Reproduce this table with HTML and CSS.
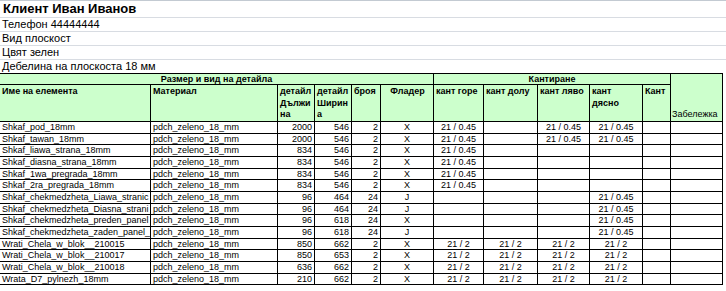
FILE: index.html
```html
<!DOCTYPE html>
<html lang="bg">
<head>
<meta charset="utf-8">
<title>Клиент Иван Иванов</title>
<link rel="stylesheet" href="styles.css">
</head>
<body>
<div class="info">
  <div class="title">Клиент Иван Иванов</div>
  <div class="line">Телефон 44444444</div>
  <div class="line">Вид плоскост</div>
  <div class="line">Цвят зелен</div>
  <div class="line last">Дебелина на плоскоста 18 мм</div>
</div>
<table class="sheet">
  <colgroup>
    <col class="w-name">
    <col class="w-mat">
    <col class="w-37">
    <col class="w-37">
    <col class="w-29">
    <col class="w-53">
    <col class="w-50">
    <col class="w-54">
    <col class="w-52">
    <col class="w-53">
    <col class="w-28">
    <col class="w-52">
  </colgroup>
  <thead>
    <tr class="grp">
      <th colspan="6">Размер и вид на детайла</th>
      <th colspan="5">Кантиране</th>
      <th rowspan="2" class="note">Забележка</th>
    </tr>
    <tr class="hdr">
      <th>Име на елемента</th>
      <th>Материал</th>
      <th>детайл<br>Дължи<br>на</th>
      <th>детайл<br>Ширин<br>а</th>
      <th>броя</th>
      <th class="ctr">Фладер</th>
      <th>кант горе</th>
      <th>кант долу</th>
      <th>кант ляво</th>
      <th>кант<br>дясно</th>
      <th>Кант</th>
    </tr>
  </thead>
  <tbody>
    <tr><td>Shkaf_pod_18mm</td><td>pdch_zeleno_18_mm</td><td class="num">2000</td><td class="num">546</td><td class="num">2</td><td class="ctr">X</td><td class="ctr">21 / 0.45</td><td></td><td class="ctr">21 / 0.45</td><td class="ctr">21 / 0.45</td><td></td><td></td></tr>
    <tr><td>Shkaf_tawan_18mm</td><td>pdch_zeleno_18_mm</td><td class="num">2000</td><td class="num">546</td><td class="num">2</td><td class="ctr">X</td><td class="ctr">21 / 0.45</td><td></td><td class="ctr">21 / 0.45</td><td class="ctr">21 / 0.45</td><td></td><td></td></tr>
    <tr><td>Shkaf_liawa_strana_18mm</td><td>pdch_zeleno_18_mm</td><td class="num">834</td><td class="num">546</td><td class="num">2</td><td class="ctr">X</td><td class="ctr">21 / 0.45</td><td></td><td></td><td></td><td></td><td></td></tr>
    <tr><td>Shkaf_diasna_strana_18mm</td><td>pdch_zeleno_18_mm</td><td class="num">834</td><td class="num">546</td><td class="num">2</td><td class="ctr">X</td><td class="ctr">21 / 0.45</td><td></td><td></td><td></td><td></td><td></td></tr>
    <tr><td>Shkaf_1wa_pregrada_18mm</td><td>pdch_zeleno_18_mm</td><td class="num">834</td><td class="num">546</td><td class="num">2</td><td class="ctr">X</td><td class="ctr">21 / 0.45</td><td></td><td></td><td></td><td></td><td></td></tr>
    <tr><td>Shkaf_2ra_pregrada_18mm</td><td>pdch_zeleno_18_mm</td><td class="num">834</td><td class="num">546</td><td class="num">2</td><td class="ctr">X</td><td class="ctr">21 / 0.45</td><td></td><td></td><td></td><td></td><td></td></tr>
    <tr><td>Shkaf_chekmedzheta_Liawa_stranic</td><td>pdch_zeleno_18_mm</td><td class="num">96</td><td class="num">464</td><td class="num">24</td><td class="ctr">J</td><td></td><td></td><td></td><td class="ctr">21 / 0.45</td><td></td><td></td></tr>
    <tr><td>Shkaf_chekmedzheta_Diasna_strani</td><td>pdch_zeleno_18_mm</td><td class="num">96</td><td class="num">464</td><td class="num">24</td><td class="ctr">J</td><td></td><td></td><td></td><td class="ctr">21 / 0.45</td><td></td><td></td></tr>
    <tr><td>Shkaf_chekmedzheta_preden_panel</td><td>pdch_zeleno_18_mm</td><td class="num">96</td><td class="num">618</td><td class="num">24</td><td class="ctr">X</td><td></td><td></td><td></td><td class="ctr">21 / 0.45</td><td></td><td></td></tr>
    <tr><td>Shkaf_chekmedzheta_zaden_panel_</td><td>pdch_zeleno_18_mm</td><td class="num">96</td><td class="num">618</td><td class="num">24</td><td class="ctr">J</td><td></td><td></td><td></td><td class="ctr">21 / 0.45</td><td></td><td></td></tr>
    <tr><td>Wrati_Chela_w_blok__210015</td><td>pdch_zeleno_18_mm</td><td class="num">850</td><td class="num">662</td><td class="num">2</td><td class="ctr">X</td><td class="ctr">21 / 2</td><td class="ctr">21 / 2</td><td class="ctr">21 / 2</td><td class="ctr">21 / 2</td><td></td><td></td></tr>
    <tr><td>Wrati_Chela_w_blok__210017</td><td>pdch_zeleno_18_mm</td><td class="num">850</td><td class="num">653</td><td class="num">2</td><td class="ctr">X</td><td class="ctr">21 / 2</td><td class="ctr">21 / 2</td><td class="ctr">21 / 2</td><td class="ctr">21 / 2</td><td></td><td></td></tr>
    <tr><td>Wrati_Chela_w_blok__210018</td><td>pdch_zeleno_18_mm</td><td class="num">636</td><td class="num">662</td><td class="num">2</td><td class="ctr">X</td><td class="ctr">21 / 2</td><td class="ctr">21 / 2</td><td class="ctr">21 / 2</td><td class="ctr">21 / 2</td><td></td><td></td></tr>
    <tr><td>Wrata_D7_pylnezh_18mm</td><td>pdch_zeleno_18_mm</td><td class="num">210</td><td class="num">662</td><td class="num">2</td><td class="ctr">X</td><td class="ctr">21 / 2</td><td class="ctr">21 / 2</td><td class="ctr">21 / 2</td><td class="ctr">21 / 2</td><td></td><td></td></tr>
  </tbody>
</table>
</body>
</html>
```

FILE: styles.css
```css
* { box-sizing: border-box; }

body {
  margin: 0;
  background: #fff;
  color: #000;
  font-family: "Liberation Sans", Arial, sans-serif;
}

.info { width: 726px; }

.title {
  height: 18px;
  border-top: 1px solid #c3cad2;
  border-bottom: 1px solid #d8dce2;
  padding-left: 3px;
  font-size: 13px;
  font-weight: bold;
  line-height: 16px;
}

.line {
  height: 14px;
  border-bottom: 1px solid #d8dce2;
  padding-left: 2px;
  font-size: 11px;
  line-height: 13px;
  white-space: nowrap;
}

.line.last {
  height: 13px;
  border-bottom: 0;
}

.sheet {
  border-collapse: separate;
  border-spacing: 0;
  table-layout: fixed;
  width: 723px;
  border-top: 1px solid #000;
  font-size: 9px;
}

.w-name { width: 151px; }
.w-mat { width: 127px; }
.w-37 { width: 37px; }
.w-29 { width: 29px; }
.w-53 { width: 53px; }
.w-50 { width: 50px; }
.w-54 { width: 54px; }
.w-52 { width: 52px; }
.w-28 { width: 28px; }

.sheet th,
.sheet td {
  border-right: 1px solid #000;
  border-bottom: 1px solid #000;
  padding: 0 2px;
  overflow: hidden;
  white-space: nowrap;
  text-overflow: clip;
  text-align: left;
  line-height: 10.6px;
}

.sheet th {
  background: #ccffcc;
  font-weight: bold;
  vertical-align: top;
}

.grp { height: 11px; }
.grp th {
  text-align: center;
  line-height: 10px;
}

.hdr { height: 37px; }
.hdr th {
  padding: 1px 1px 0 2px;
  line-height: 11.6px;
  white-space: normal;
}

.sheet th.note {
  vertical-align: bottom;
  text-align: left;
  font-weight: normal;
  line-height: 11px;
  padding: 0 1px 1px 1px;
}

.sheet tbody tr { height: 11.67px; }

.sheet td { vertical-align: middle; }

.sheet td:first-child { padding-right: 0; }

.sheet .num { text-align: right; }
.sheet .ctr { text-align: center; }
```
